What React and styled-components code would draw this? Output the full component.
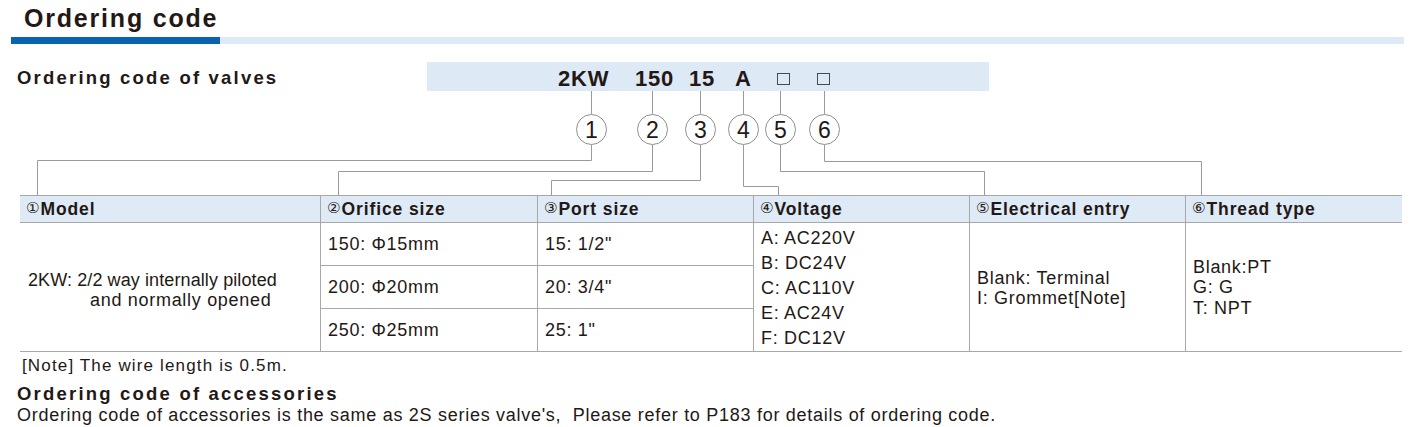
import React from 'react';
import styled, { createGlobalStyle } from 'styled-components';

const GlobalStyle = createGlobalStyle`
  html, body { margin: 0; padding: 0; background: #ffffff; }
  body {
    font-family: "Liberation Sans", Arial, Helvetica, sans-serif;
    color: #231815;
  }
  * { box-sizing: border-box; }
`;

const Page = styled.div`
  width: 1418px;
  height: 427px;
  overflow: hidden;
`;

const Title = styled.h1`
  margin: 0;
  height: 37px;
  padding: 4px 0 0 24px;
  font-size: 25px;
  line-height: 28px;
  font-weight: 700;
  letter-spacing: 1.8px;
`;

const TitleBar = styled.div`
  display: flex;
  margin-left: 11px;
  width: 1393px;
  height: 7px;
`;

const BarSegment = styled.div`
  flex: ${(p) => (p.$width ? `0 0 ${p.$width}px` : '1 1 auto')};
  background: ${(p) => (p.$accent ? '#0a63b0' : '#deeaf5')};
`;

const ValvesRow = styled.div`
  display: flex;
  align-items: center;
  margin-top: 18px;
  height: 29px;
`;

const SubHeading = styled.h2`
  margin: 0;
  padding-left: 17px;
  font-size: 18.5px;
  font-weight: 700;
  letter-spacing: 2.2px;
  line-height: 22px;
`;

const ValvesLabel = styled(SubHeading)`
  width: 427px;
  padding-top: 3px;
`;

const CodeBar = styled.div`
  display: flex;
  align-items: center;
  width: 562px;
  height: 29px;
  padding: 4px 0 0 131px;
  background: #dde9f5;
`;

const CodeToken = styled.span`
  flex: 0 0 ${(p) => p.$slot}px;
  font-size: 22px;
  font-weight: 700;
  letter-spacing: 0.8px;
  line-height: 24px;
`;

const BlankBox = styled.span`
  flex: 0 0 ${(p) => p.$slot}px;
  display: flex;
  align-items: center;
  height: 24px;
  &::before {
    content: '';
    display: block;
    width: 11px;
    height: 10px;
    border: 1px solid #4a4a4a;
    margin-top: 1px;
  }
`;

const Diagram = styled.div`
  position: relative;
  height: 104px;
`;

const Wires = styled.svg`
  position: absolute;
  left: 0;
  top: 0;
  width: 1418px;
  height: 104px;
  overflow: visible;
`;

const Node = styled.div`
  position: absolute;
  top: 23px;
  width: 31px;
  height: 31px;
  border: 1px solid #8f8f8f;
  border-radius: 50%;
  background: #fff;
  display: flex;
  align-items: center;
  justify-content: center;
  font-size: 23px;
  line-height: 1;
  padding-top: 1px;
`;

const Table = styled.div`
  display: grid;
  margin-left: 20px;
  width: 1382px;
  grid-template-columns: 301px 217px 216px 216px 216px 216px;
  grid-template-rows: 28px 43px 43px 43px;
`;

const Cell = styled.div`
  display: flex;
  align-items: center;
  padding-left: ${(p) => (p.$pad ? p.$pad : 7)}px;
  border-bottom: 1px solid #a8a8a8;
  border-right: ${(p) => (p.$last ? 'none' : '1px solid #a8a8a8')};
  grid-row: ${(p) => (p.$rows ? `span ${p.$rows}` : 'auto')};
  font-size: 18px;
  letter-spacing: 0.7px;
  line-height: ${(p) => p.$lh || 20}px;
`;

const HeadCell = styled(Cell)`
  background: #deeaf6;
  border-top: 1px solid #a8a8a8;
  font-size: 17.5px;
  font-weight: 700;
  letter-spacing: 0.9px;
  padding-left: 6px;
`;

const Circled = styled.span`
  font-family: "DejaVu Sans", sans-serif;
  font-weight: 400;
  font-size: 15px;
  margin-right: 1px;
  letter-spacing: 0;
  position: relative;
  top: -1px;
`;

const Lines = styled.div`
  display: flex;
  flex-direction: column;
  padding-top: ${(p) => p.$shift || 0}px;
`;

const Line = styled.span`
  padding-left: ${(p) => p.$indent || 0}px;
  letter-spacing: ${(p) => (p.$tight ? '0.1px' : 'inherit')};
  white-space: nowrap;
`;

const Note = styled.p`
  margin: 4px 0 0;
  padding-left: 22px;
  font-size: 17px;
  letter-spacing: 1.15px;
  line-height: 20px;
`;

const AccessoriesHeading = styled(SubHeading)`
  margin-top: 7px;
`;

const BodyText = styled.p`
  margin: 0;
  padding-left: 17px;
  font-size: 18px;
  letter-spacing: 0.72px;
  line-height: 20px;
`;

const nodes = [
  { n: '1', x: 591 },
  { n: '2', x: 652 },
  { n: '3', x: 700 },
  { n: '4', x: 743 },
  { n: '5', x: 780 },
  { n: '6', x: 824 },
];

const wires = [
  [[591, 53], [591, 69], [37, 69], [37, 104]],
  [[652, 53], [652, 80], [338, 80], [338, 104]],
  [[700, 53], [700, 89], [551, 89], [551, 104]],
  [[743, 53], [743, 95], [778, 95], [778, 104]],
  [[780, 53], [780, 80], [984, 80], [984, 104]],
  [[824, 53], [824, 70], [1201, 70], [1201, 104]],
];

const pt = (p) => `${p[0] + 0.5},${p[1] + 0.5}`;

export default function App() {
  return (
    <Page>
      <GlobalStyle />
      <Title>Ordering code</Title>
      <TitleBar>
        <BarSegment $accent $width={209} />
        <BarSegment />
      </TitleBar>

      <ValvesRow>
        <ValvesLabel>Ordering code of valves</ValvesLabel>
        <CodeBar>
          <CodeToken $slot={77}>2KW</CodeToken>
          <CodeToken $slot={54}>150</CodeToken>
          <CodeToken $slot={46}>15</CodeToken>
          <CodeToken $slot={42}>A</CodeToken>
          <BlankBox $slot={40} />
          <BlankBox $slot={20} />
        </CodeBar>
      </ValvesRow>

      <Diagram>
        <Wires viewBox="0 0 1418 104">
          <g stroke="#9a9a9a" strokeWidth="1" fill="none">
            {nodes.map((d) => (
              <line key={d.n} x1={d.x + 0.5} y1={0} x2={d.x + 0.5} y2={23} />
            ))}
            {wires.map((w, i) => (
              <polyline key={i} points={w.map(pt).join(' ')} />
            ))}
          </g>
        </Wires>
        {nodes.map((d) => (
          <Node key={d.n} style={{ left: d.x - 15 }}>
            {d.n}
          </Node>
        ))}
      </Diagram>

      <Table>
        <HeadCell><Circled>①</Circled>Model</HeadCell>
        <HeadCell><Circled>②</Circled>Orifice size</HeadCell>
        <HeadCell><Circled>③</Circled>Port size</HeadCell>
        <HeadCell><Circled>④</Circled>Voltage</HeadCell>
        <HeadCell><Circled>⑤</Circled>Electrical entry</HeadCell>
        <HeadCell $last><Circled>⑥</Circled>Thread type</HeadCell>

        <Cell $rows={3} $pad={8}>
          <Lines $shift={6}>
            <Line $tight>2KW: 2/2 way internally piloted</Line>
            <Line $indent={62}>and normally opened</Line>
          </Lines>
        </Cell>
        <Cell>150: Φ15mm</Cell>
        <Cell>15: 1/2"</Cell>
        <Cell $rows={3} $lh={25}>
          <Lines $shift={3}>
            <Line>A: AC220V</Line>
            <Line>B: DC24V</Line>
            <Line>C: AC110V</Line>
            <Line>E: AC24V</Line>
            <Line>F: DC12V</Line>
          </Lines>
        </Cell>
        <Cell $rows={3}>
          <Lines $shift={1}>
            <Line>Blank: Terminal</Line>
            <Line>I: Grommet[Note]</Line>
          </Lines>
        </Cell>
        <Cell $rows={3} $last $lh={20.5}>
          <Lines $shift={1}>
            <Line>Blank:PT</Line>
            <Line>G: G</Line>
            <Line>T: NPT</Line>
          </Lines>
        </Cell>
        <Cell>200: Φ20mm</Cell>
        <Cell>20: 3/4"</Cell>
        <Cell>250: Φ25mm</Cell>
        <Cell>25: 1"</Cell>
      </Table>

      <Note>[Note] The wire length is 0.5m.</Note>
      <AccessoriesHeading>Ordering code of accessories</AccessoriesHeading>
      <BodyText>
        Ordering code of accessories is the same as 2S series valve's,&nbsp; Please refer to P183 for details of ordering code.
      </BodyText>
    </Page>
  );
}
